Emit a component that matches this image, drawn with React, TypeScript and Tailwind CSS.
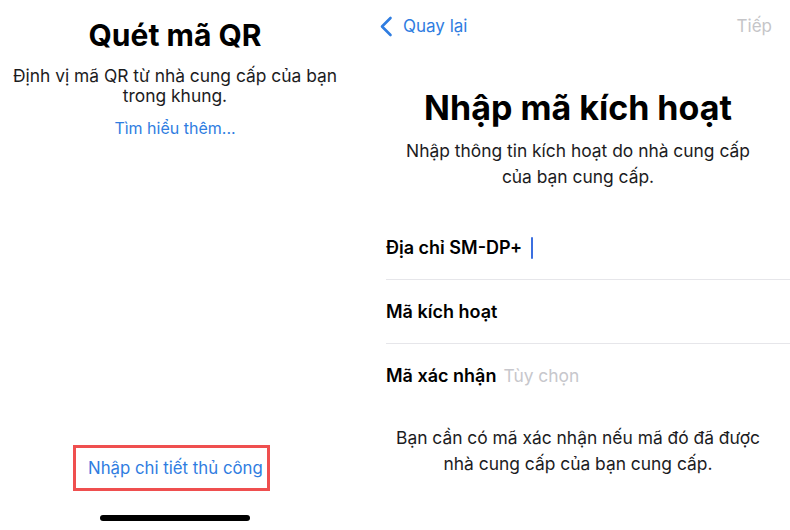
import React from 'react';

// Two iOS eSIM setup screens side by side: "scan QR" on the left, manual activation form on the right.

const font = { fontFamily: 'Inter, "Noto Sans", sans-serif' };

function Chevron() {
  return (
    <svg width="14" height="21" viewBox="0 0 14 21" fill="none">
      <path d="M11.5 2 L3 10.5 L11.5 19" stroke="#2f7de1" strokeWidth="2.6" strokeLinecap="round" strokeLinejoin="round" />
    </svg>
  );
}

function ScanPanel() {
  return (
    <div className="flex h-[530px] w-[350px] flex-col items-center">
      <h1 className="pt-[17px] text-[30px] font-bold leading-[36px] text-black">Quét mã QR</h1>
      <p className="mt-[13px] text-center text-[17.4px] leading-[20px] text-[#1c1c1e]">
        Định vị mã QR từ nhà cung cấp của bạn
        <br />
        trong khung.
      </p>
      <a className="mt-[12px] text-[16px] leading-[20px] text-[#2f7de1]">Tìm hiểu thêm...</a>
      <div className="flex-1" />
      <div className="ml-[73px] flex h-[46px] w-[197px] items-center self-start border-[3px] border-[#ef4f4f] pl-[12px]">
        <span className="text-[16.8px] leading-[22px] text-[#2f7de1]">Nhập chi tiết thủ công</span>
      </div>
      <div className="mb-[9px] mt-[24px] h-[6px] w-[150px] rounded-full bg-black" />
    </div>
  );
}

function FieldRow({ label, children, divider }: { label: string; children?: React.ReactNode; divider?: boolean }) {
  return (
    <div className={`ml-5 flex h-[64px] items-center ${divider ? 'border-b border-[#e6e6ea]' : ''}`}>
      <span className="text-[18px] font-semibold leading-[22px] text-black">{label}</span>
      {children}
    </div>
  );
}

function ActivationPanel() {
  return (
    <div className="ml-4 flex h-[530px] flex-1 flex-col">
      <div className="flex items-start justify-between pl-[13px] pr-[18px] pt-[15px]">
        <div className="flex items-center gap-[10px]">
          <Chevron />
          <span className="text-[17px] leading-[22px] text-[#2f7de1]">Quay lại</span>
        </div>
        <span className="text-[17px] leading-[22px] text-[#c5c5c8]">Tiếp</span>
      </div>
      <h1 className="mt-[51px] text-center text-[34px] font-bold leading-[40px] text-black">Nhập mã kích hoạt</h1>
      <p className="mt-[10px] text-center text-[17.4px] leading-[26px] text-[#1c1c1e]">
        Nhập thông tin kích hoạt do nhà cung cấp
        <br />
        của bạn cung cấp.
      </p>
      <div className="mt-[26px] flex flex-col">
        <FieldRow label="Địa chỉ SM-DP+" divider>
          <span className="ml-[9px] h-[22px] w-[2px] rounded-full bg-[#3b6fe0]" />
        </FieldRow>
        <FieldRow label="Mã kích hoạt" divider />
        <FieldRow label="Mã xác nhận">
          <span className="ml-[7px] text-[17.4px] leading-[22px] text-[#c7c7cc]">Tùy chọn</span>
        </FieldRow>
      </div>
      <p className="mt-[17px] text-center text-[17.4px] leading-[26px] text-[#1c1c1e]">
        Bạn cần có mã xác nhận nếu mã đó đã được
        <br />
        nhà cung cấp của bạn cung cấp.
      </p>
    </div>
  );
}

export default function App() {
  return (
    <div className="flex h-[530px] w-[790px] overflow-hidden bg-white" style={font}>
      <ScanPanel />
      <ActivationPanel />
    </div>
  );
}
